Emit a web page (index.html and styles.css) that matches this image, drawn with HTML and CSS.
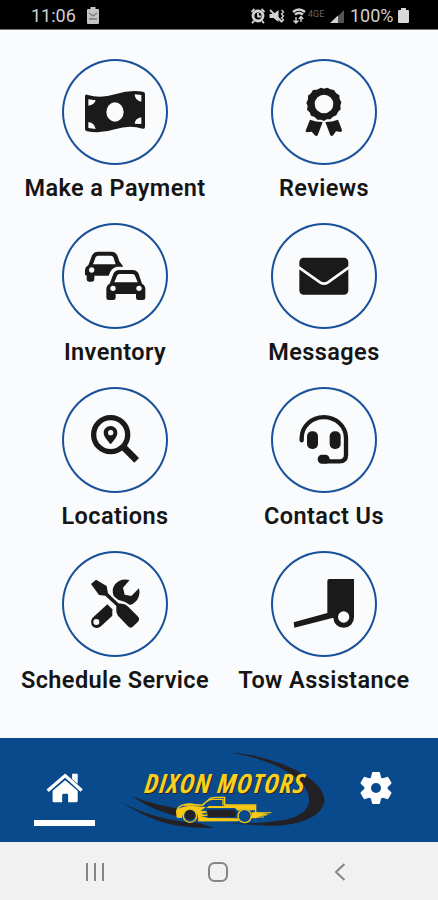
FILE: index.html
```html
<!DOCTYPE html>
<html lang="en">
<head>
<meta charset="utf-8">
<title>Dixon Motors</title>
<link rel="stylesheet" href="styles.css">
</head>
<body>
<div class="phone">
  <header class="status">
    <span class="clock">11:06</span>
    <svg class="status-battery" viewBox="0 0 12 17"><path d="M3.500 0h5v2H11q1 0 1 1v13q0 1-1 1H1q-1 0-1-1V3q0-1 1-1h2.500z" fill="#c4c4c4"/><path d="M2 6l4 3 4-3M2 12h8" stroke="#777" stroke-width="1.300" fill="none"/></svg>
    <svg class="status-icons" viewBox="0 0 96 18">
      <g fill="none" stroke="#d2d2d2">
        <circle cx="8" cy="9" r="5" stroke-width="2.800"/><path d="M1.500 5l3-3M14.500 5l-3-3M4 14l-2 2M12 14l2 2M8 6v3.500h3" stroke-width="1.800"/>
        <path d="M20 3l12 12" stroke-width="1.800"/><path d="M31.500 3l2 2-2 2 2 2-2 2 2 2-2 2" stroke-width="1.300"/>
        <path d="M43 5q6-5 12 0M45 7.500q4-3 8 0" stroke-width="2.400"/><path d="M46 10v6M43.500 13.500L46 16l2.500-2.500M51 15V9.500M48.800 12l2.200-2.500 2.200 2.500" stroke-width="1.400"/>
      </g>
      <path d="M19.500 7h4l5-4v12l-5-4h-4z" fill="#d2d2d2"/>
      <text class="network" x="58" y="10">4GE</text>
      <path d="M81 16h13V3z" fill="#555"/><path d="M80 16h8V8.500z" fill="#d2d2d2"/>
    </svg>
    <span class="percent">100%</span>
    <svg class="charge" viewBox="0 0 11 15"><path d="M3 0h5v2h2q1 0 1 1v11q0 1-1 1H1q-1 0-1-1V3q0-1 1-1h2z" fill="#d8d8d8"/></svg>
  </header>

  <main class="menu">
    <a class="tile"><span class="ring"><svg viewBox="156 25 318 318">
      <path d="M231 132Q271 145 315 131T399 123Q405 124 405 130V228Q405 236 398 234Q358 222 315 236T231 242Q225 240 225 235V137Q225 131 231 132z"/>
      <g class="cut"><ellipse cx="315" cy="184" rx="26" ry="29"/><path d="M235 146l22 3q-4 15-22 16zM235 214q19 3 22 21l-22-3zM374 131l20 2v20q-19-3-20-22zM394 200v20l-20-1q2-17 20-19z"/></g>
    </svg></span><span class="label">Make a Payment</span></a>

    <a class="tile"><span class="ring"><svg viewBox="138 25 318 318">
      <path d="M288 111L297 114 307 111 316 116 327 118 333 127 343 134 344 145 349 155 346 165 347 176 339 184 334 194 324 198 316 206 305 206 297 211 288 207 277 207 269 199 258 195 254 185 246 177 248 166 244 156 249 146 249 135 258 128 264 118 275 117z"/>
      <circle class="cut" cx="297" cy="160" r="28"/>
      <path d="M255 207Q272 214 293 214L278 254Q273 258 269 253L260 243 245 245Q240 243 243 237zM339 207Q322 214 301 214L316 254Q321 258 325 253L333 242 348 244Q353 241 350 235z"/>
    </svg></span><span class="label">Reviews</span></a>

    <a class="tile"><span class="ring"><svg viewBox="156 22 318 318">
      <path d="M299 204L309 177Q314 163 328 163H368Q382 163 387 177L396 204Q406 209 406 220V246Q406 253 399 253H385Q378 253 378 246V235H317V246Q317 253 310 253H296Q289 253 289 246V220Q289 209 299 204z"/><path class="cut" d="M313 200l8-20q2-5 7-5h40q5 0 7 5l8 20z"/><circle class="cut" cx="309" cy="218" r="8"/><circle class="cut" cx="387" cy="218" r="8"/>
      <path d="M235 149L245 122Q250 108 264 108H304Q318 108 323 122L328 137 340 153H321Q303 156 296 180H253V191Q253 198 246 198H237Q230 198 230 191V179H225V165Q225 154 235 149z"/>
      <path class="cut" d="M249 146l8-21q2-5 7-5h39q5 0 7 5l7 21z"/><circle class="cut" cx="245" cy="163" r="8"/>
    </svg></span><span class="label">Inventory</span></a>

    <a class="tile"><span class="ring"><svg viewBox="138 22 318 318">
      <rect x="223" y="126" width="147" height="111" rx="13"/><path class="cut-line" d="M218 153L285 200Q297 208 309 200L375 153" stroke-width="8"/>
    </svg></span><span class="label">Messages</span></a>

    <a class="tile"><span class="ring"><svg viewBox="156 20 318 318">
      <circle class="line" cx="302" cy="163" r="51" stroke-width="16"/><path class="line" d="M342 202L380 240" stroke-width="20"/>
      <path d="M302 137c-12 0-21 9-21 20 0 13 12 23 21 35 9-12 20-22 20-35 0-11-9-20-20-20z"/><circle class="cut" cx="302" cy="157" r="8"/>
    </svg></span><span class="label">Locations</span></a>

    <a class="tile"><span class="ring"><svg viewBox="138 20 318 318">
      <path class="line" d="M230 180V173A66 62 0 0 1 363 173V224Q363 243 344 243H300" stroke-width="13" stroke-linecap="round"/>
      <rect x="246" y="153" width="33" height="53" rx="15"/><rect x="314" y="153" width="33" height="53" rx="15"/><rect x="278" y="223" width="36" height="27" rx="13"/>
    </svg></span><span class="label">Contact Us</span></a>

    <a class="tile"><span class="ring"><svg viewBox="156 17 318 318">
      <path d="M243 116L258 103 290 122 294 144 325 174 340 176Q347 177 353 183L383 213Q391 221 384 229L370 243Q362 251 354 243L324 211Q319 205 319 198V182L286 151 267 149z"/>
      <path d="M292 177L307 192V211L273 243Q262 253 249 244 238 232 247 218z"/><circle class="cut" cx="259" cy="230" r="9"/>
      <path d="M359 104Q329 97 313 120 304 135 311 152L324 163Q344 167 360 179 382 171 387 151 390 139 387 129L364 152 344 148 339 127z"/>
    </svg></span><span class="label">Schedule Service</span></a>

    <a class="tile"><span class="ring"><svg viewBox="138 17 318 318">
      <path d="M313 101H387V216A31 31 0 0 1 325 217L208 247 206 231 307 203V108Q307 101 313 101z"/><circle class="cut" cx="356" cy="215" r="17"/>
    </svg></span><span class="label">Tow Assistance</span></a>
  </main>

  <nav class="tabs">
    <a class="tab active"><svg class="home" viewBox="138 128 112 92" fill="#fff"><path d="M158 184L196 152 234 184V214Q234 219 229 219H205V197Q205 193 201 193H191Q187 193 187 197V219H162Q158 219 158 215z"/><path d="M143 184L196 138 246 183" fill="none" stroke="#fff" stroke-width="10"/><path d="M217 132h17v31l-17-15z"/></svg><span class="bar"></span></a>
    <svg class="logo" viewBox="0 12 660 309">
      <g fill="#232126">
        <path d="M365 53C440 57 520 83 577 116C626 143 651 180 641 209C621 257 540 277 450 271L350 265C430 267 520 262 559 244C615 218 605 169 560 130C510 89 440 66 365 53z"/>
        <path d="M32 201C95 234 175 261 268 264Q300 275 312 279Q200 280 140 256C100 240 66 222 32 201z"/>
        <path d="M66 184C120 206 170 214 216 224L222 248C165 239 109 213 66 184z"/>
      </g>
      <g fill="none" stroke="#f9c914" stroke-width="4">
        <path d="M202 247L200 229Q203 214 219 210L277 210 301 190Q308 187 319 187H344V210H437V247H421M266 257H384M278 211Q291 195 306 193H339V211M219 210Q242 203 266 212"/>
        <circle cx="240" cy="242" r="20"/><circle cx="404" cy="243" r="20"/>
        <path d="M433 233H484M430 240H470M438 246H462M279 228L294 234M274 242L294 239" stroke-width="3"/>
      </g>
      <path d="M200 224Q220 211 248 213L288 216 272 227 295 231 273 236 296 242 273 243 295 249 382 250 387 258 264 259Q268 229 244 222 222 218 216 249L201 248zM345 211H438V226H418Q403 216 385 228L375 219H289L297 213H345zM427 231L480 237 455 242 438 250 423 249z" fill="#f9c914"/>
      <path d="M290 224H373L379 233 375 246H294z" fill="#232126"/><circle cx="240" cy="240" r="15" fill="#232126"/>
      <g transform="translate(102 174) skewX(-5)"><text class="brand-shadow" x="3" y="3" textLength="479">DIXON MOTORS</text><text class="brand" x="0" y="0" textLength="479">DIXON MOTORS</text></g>
    </svg>
    <a class="tab settings"><svg class="gear" viewBox="-16 -16 32 32"><g fill="#fff"><circle r="11.500"/><path id="teeth" d="M-4-15Q-4-16-3-16H3Q4-16 4-15L5.500-9H-5.500zM-4 15Q-4 16-3 16H3Q4 16 4 15L5.500 9H-5.500z"/><use href="#teeth" transform="rotate(60)"/><use href="#teeth" transform="rotate(120)"/></g><circle r="5" fill="#094a8c"/></svg></a>
  </nav>

  <footer class="system">
    <svg viewBox="0 0 20 20"><path d="M2 1v18M10 1v18M18 1v18"/></svg>
    <svg viewBox="0 0 20 20"><rect x="1" y="1" width="18" height="18" rx="5.500"/></svg>
    <svg viewBox="0 0 20 20"><path d="M14.500 2L6 10l8.500 8"/></svg>
  </footer>
</div>
</body>
</html>
```
FILE: styles.css
```css
* { box-sizing: border-box; }
body { margin: 0; font-family: Roboto, "Liberation Sans", sans-serif; }
.phone { width: 438px; height: 900px; display: flex; flex-direction: column; background: #f9fbfd; overflow: hidden; }
svg { display: block; }
.status { height: 30px; flex: none; background: #000; border-bottom: 1px solid #777; display: flex; align-items: center; padding: 2px 29px 0 31px; color: #d0d0d0; font-size: 18px; }
.clock { width: 46px; letter-spacing: 0; }
.status-battery { width: 12px; height: 17px; margin-left: 10px; }
.status-icons { width: 96px; height: 18px; margin-left: auto; }
.network { font: 9px Roboto, sans-serif; fill: #666; }
.percent { width: 44px; margin-left: 4px; }
.charge { width: 11px; height: 15px; margin-left: 4px; }
.menu { height: 708px; flex: none; display: grid; grid-template-columns: 209px 209px; grid-auto-rows: 164px; padding: 28.500px 0 0 10.500px; }
.tile { display: flex; flex-direction: column; align-items: center; }
.ring { width: 106px; height: 106px; border-radius: 50%; box-shadow: inset 0 0 0 2px #18509a; }
.ring svg { width: 106px; height: 106px; fill: #1a1a1a; }
.ring .cut { fill: #f9fbfd; }
.ring .cut-line { fill: none; stroke: #f9fbfd; }
.ring .line { fill: none; stroke: #1a1a1a; }
.label { margin-top: 9.500px; font-size: 23.500px; line-height: 28px; font-weight: 600; letter-spacing: 0.400px; color: #151515; white-space: nowrap; }
.tabs { height: 104px; flex: none; background: #094a8c; display: flex; align-items: flex-start; padding-left: 34px; }
.tab { width: 61px; display: flex; flex-direction: column; align-items: center; padding-top: 34px; }
.home { width: 37px; height: 31px; }
.bar { width: 61px; height: 6px; background: #fff; margin-top: 16.500px; }
.logo { width: 220px; height: 103px; margin-left: 15px; margin-top: 1px; }
.brand, .brand-shadow { font: italic 700 80px "Open Sans", Roboto, sans-serif; font-stretch: 75%; fill: #fbd01c; }
.brand-shadow { fill: #232126; }
.settings { width: 32px; margin-left: 29.500px; }
.gear { width: 32px; height: 32px; }
.system { height: 58px; flex: none; background: #f1f1f1; display: flex; align-items: center; padding: 1px 0 0 85px; }
.system svg { width: 20px; height: 20px; fill: none; stroke: #858585; stroke-width: 2; }
.system svg + svg { margin-left: 102.500px; }
```
